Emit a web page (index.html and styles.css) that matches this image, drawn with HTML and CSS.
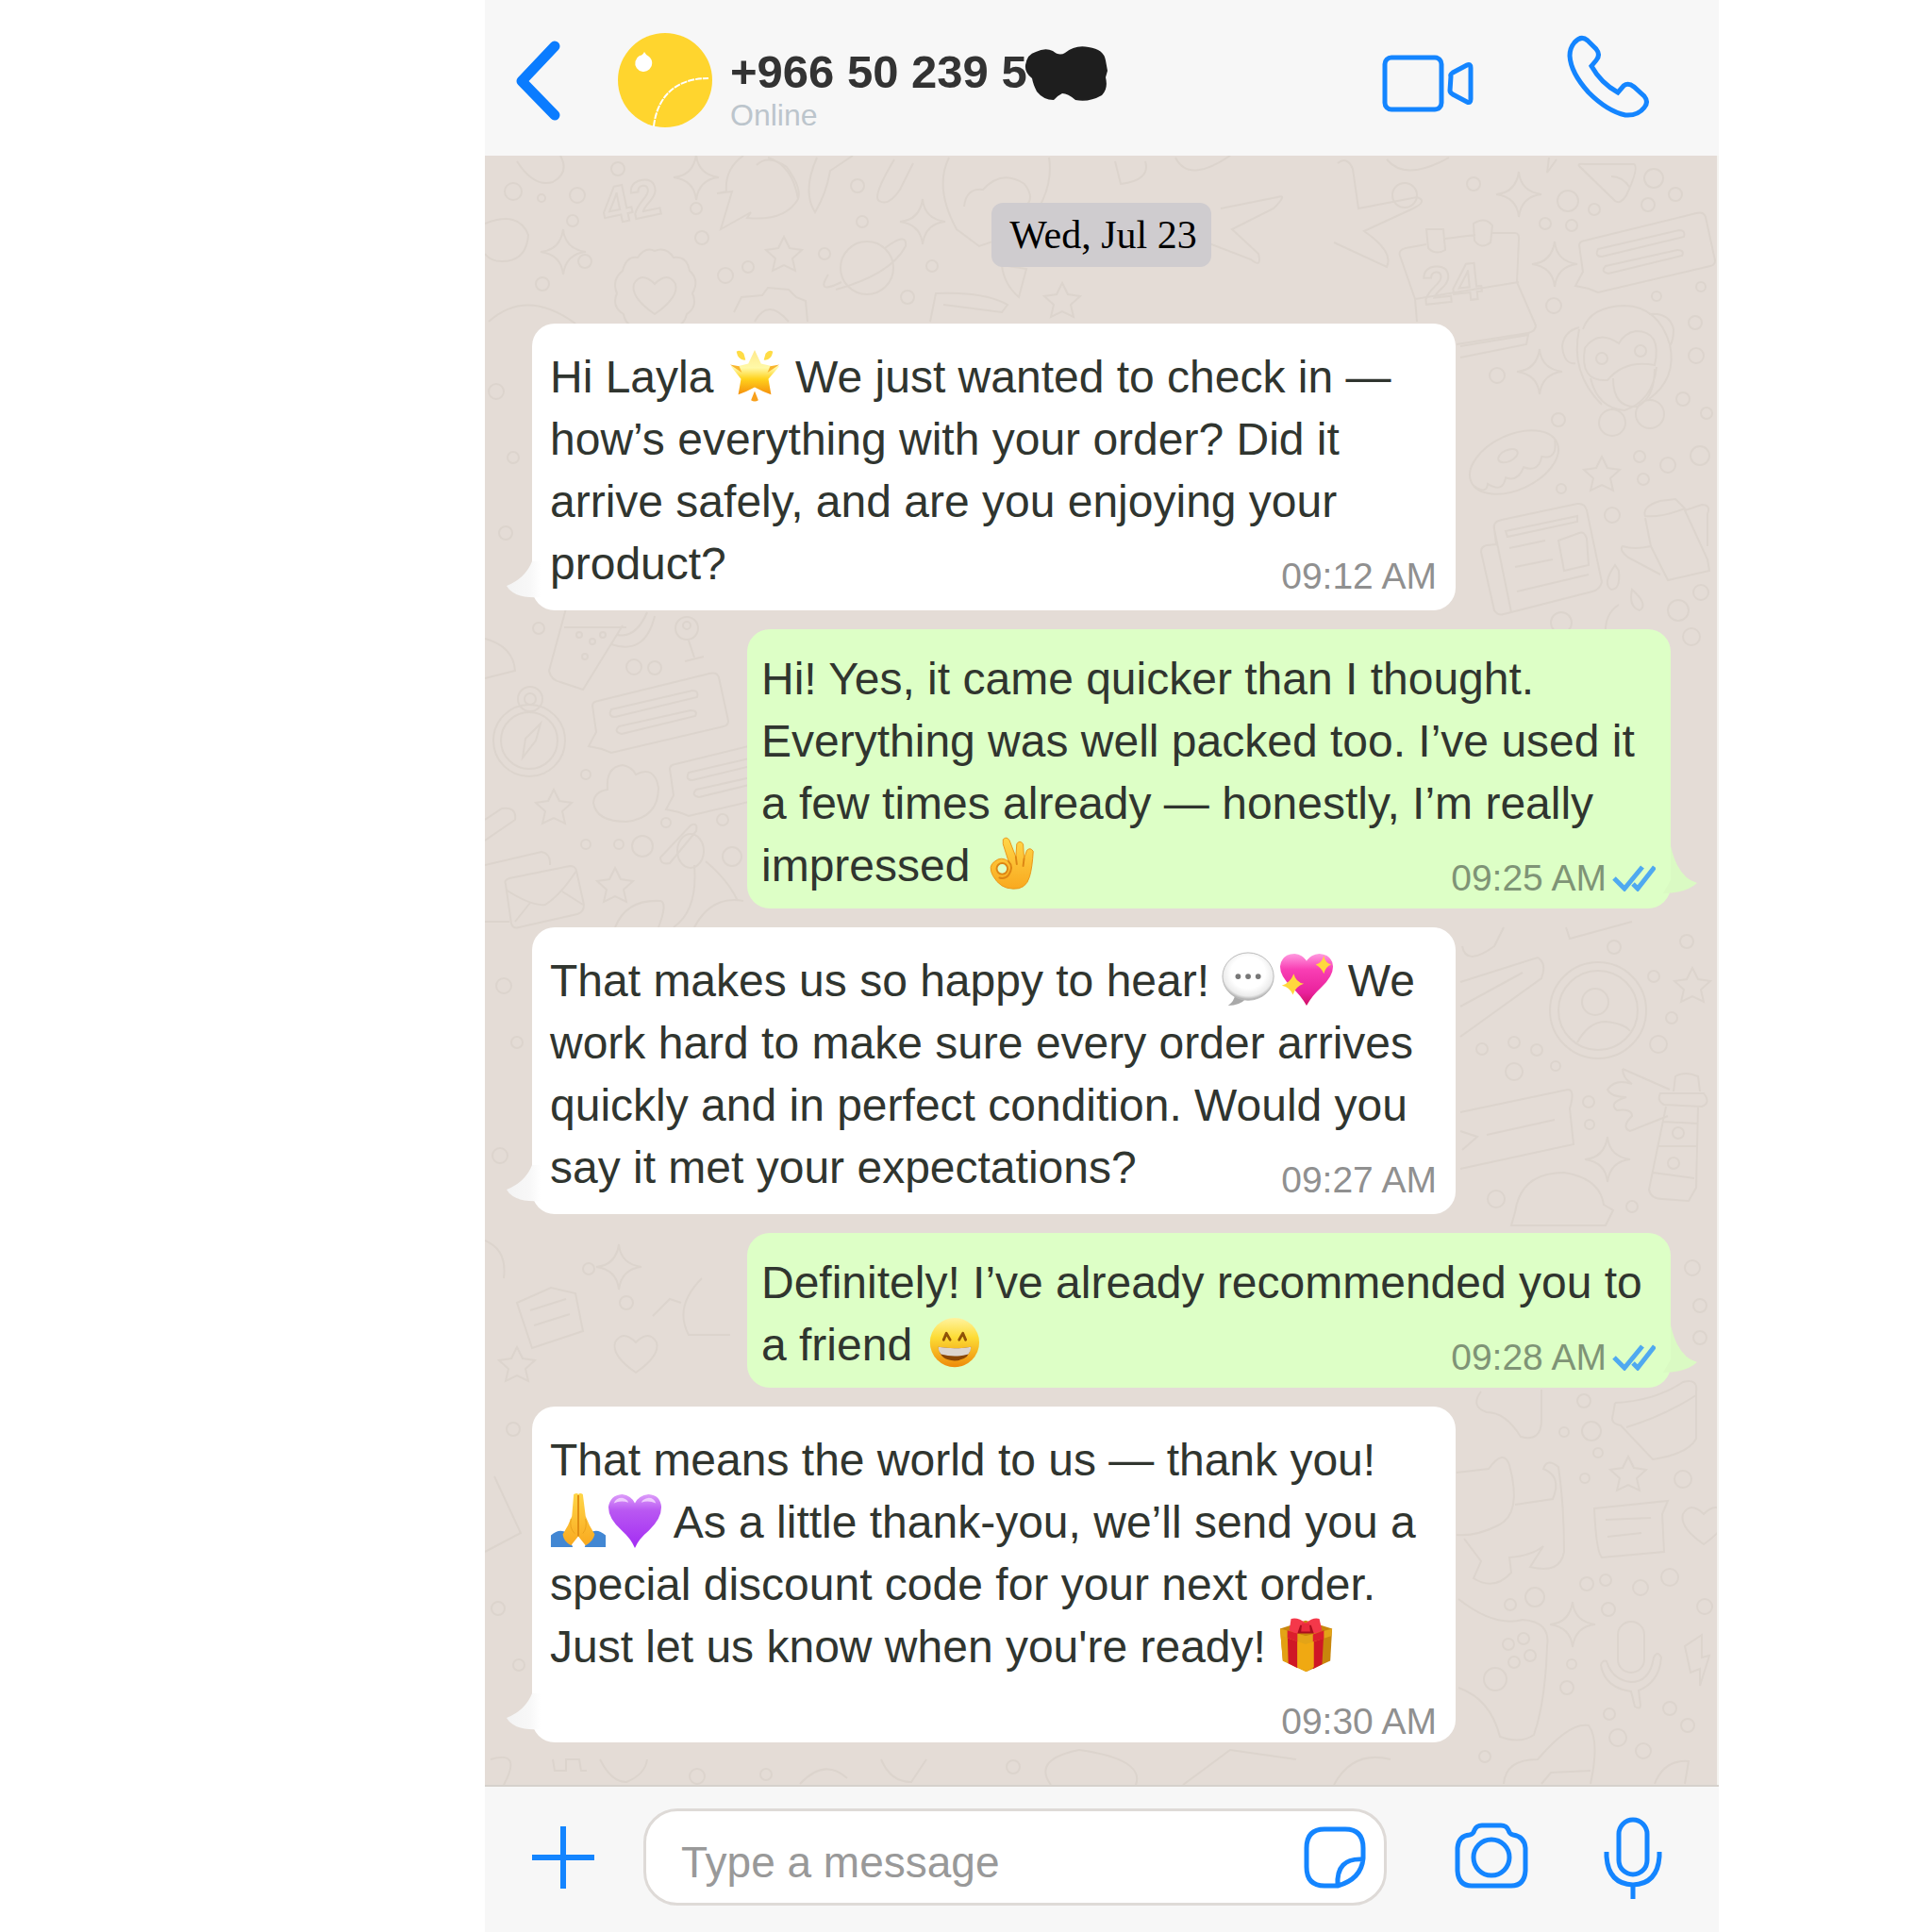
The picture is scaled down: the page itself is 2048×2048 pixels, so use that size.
FILE: index.html
```html
<!DOCTYPE html>
<html lang="en">
<head>
  <meta charset="UTF-8">
  <meta name="viewport" content="width=device-width, initial-scale=1.0">
  <title>Chat</title>
  <link rel="stylesheet" href="styles.css">
</head>
<body>
  <div class="phone">
    <header class="top-bar">
      <button class="icon-btn back" aria-label="Back">
        <svg width="50" height="100" viewBox="0 0 50 100"><path d="M43 14 L8 51 L43 87" stroke-width="11" stroke-linecap="round" stroke-linejoin="round"/></svg>
      </button>
      <svg class="avatar" width="100" height="100" viewBox="0 0 100 100" role="img" aria-label="Profile picture">
        <circle cx="50" cy="50" r="50" fill="#ffd52e"/>
        <path d="M28 20 Q30 24 33 25 A9 9 0 1 1 23 24 Q26 24 28 20 Z" fill="#fff"/>
        <path d="M38 99 C41 72 57 48 96 48" fill="none" stroke="#fff" stroke-width="2" stroke-dasharray="7 1"/>
      </svg>
      <div class="contact">
        <h1>+966 50 239 5
          <svg class="scribble" width="88" height="58" viewBox="0 0 88 58" aria-hidden="true"><path d="M1 20 Q3 8 12 6 Q22 1 30 5 Q37 11 43 7 Q54 -2 68 1 Q84 3 86 15 L88 26 L86 33 Q89 45 82 52 Q68 60 54 57 Q46 50 40 50 Q34 53 31 57 Q20 57 13 48 Q9 40 8 34 Q0 28 1 20 Z" fill="#1e1e1e"/></svg>
        </h1>
        <p>Online</p>
      </div>
      <button class="icon-btn video" aria-label="Video call">
        <svg width="100" height="100" viewBox="0 0 100 100"><rect x="4" y="26" width="60" height="55" rx="7"/><path d="M74 46 Q73 44 76 42 L91 34 Q95 32 95 37 V70 Q95 75 91 73 L76 65 Q73 63 73 61 Z"/></svg>
      </button>
      <button class="icon-btn call" aria-label="Call">
        <svg width="90" height="100" viewBox="0 0 90 100"><path d="M9 10 Q16 2 23 8 L32 17 Q37 23 32 29 L27 35 Q37 53 55 63 L61 56 Q66 52 72 57 L83 67 Q88 73 83 79 Q76 88 63 87 Q44 83 24 63 Q5 42 4 24 Q4 16 9 10 Z"/></svg>
      </button>
    </header>

    <main class="chat">
      <!-- wallpaper doodles -->
      <svg class="wallpaper" viewBox="0 0 1306 1727" preserveAspectRatio="xMinYMin slice" aria-hidden="true">
        <defs>
          <path id="spark" d="M0 -24 Q2 -3 24 0 Q3 2 0 24 Q-2 3 -24 0 Q-3 -2 0 -24 Z"/>
          <path id="star" d="M0 -19 L6 -7 L19 -5 L9 4 L12 17 L0 11 L-12 17 L-9 4 L-19 -5 L-6 -7 Z"/>
          <path id="heart" d="M0 22 Q-26 4 -22 -10 Q-14 -24 0 -10 Q14 -24 22 -10 Q26 4 0 22 Z"/>
          <g id="note">
            <path d="M4 34 Q4 30 10 29 L128 0 Q136 -2 138 4 L148 50 Q148 55 143 56 L24 84 L14 80 L0 77 L8 62 Z"/>
            <path d="M24 38 L110 18 Q117 18 115 25 L28 46 Q20 46 24 38 Z M32 56 L108 39 Q116 39 113 45 L35 64 Q26 62 32 56 Z"/>
          </g>
          <g id="cookie">
            <path d="M0 -45 Q12 -50 20 -38 Q34 -40 37 -24 Q48 -14 40 0 Q46 14 34 22 Q30 38 14 36 Q0 46 -12 36 Q-30 38 -33 22 Q-46 14 -40 0 Q-46 -14 -34 -24 Q-30 -40 -18 -38 Q-10 -50 0 -45 Z"/>
            <use href="#heart"/>
          </g>
          <g id="mic">
            <rect x="-14" y="-28" width="28" height="54" rx="14"/>
            <path d="M-26 14 Q-30 12 -32 18 Q-28 42 0 46 L4 62 Q10 66 10 60 L8 45 Q30 36 32 10 Q28 2 24 10 Q20 36 0 36 Q-20 34 -26 14 Z"/>
          </g>
        </defs>
        <!-- top -->
        <use href="#spark" x="1096" y="41"/><use href="#spark" x="1134" y="115"/><use href="#spark" x="1118" y="229"/>
        <use href="#spark" x="224" y="23"/><use href="#spark" x="464" y="70"/><use href="#spark" x="83" y="102"/>
        <use href="#star" x="317" y="105"/><use href="#star" x="612" y="154"/><use href="#star" x="1184" y="338"/>
        <use href="#cookie" x="180" y="146"/>
        <path d="M34 6 Q52 34 72 28 Q90 18 80 0 M0 72 Q36 58 46 84 Q44 112 18 112 Q6 112 0 104 M4 176 Q44 140 96 178"/>
        <text x="128" y="74" transform="rotate(-12 128 74)">42</text>
        <path d="M274 0 Q254 14 256 38 L246 40 L262 38 L250 78 L282 60 L278 66 Q318 70 332 46 Q326 10 300 2 M288 10 Q300 -2 320 12 Q336 34 332 46 M352 2 Q336 38 350 60 Q362 40 366 16 L390 0"/>
        <path d="M434 4 Q410 44 418 48 Q428 54 440 36 L454 8 M492 2 Q476 34 500 78 L524 96 L570 80 Q604 40 598 2 M508 54 Q510 34 528 36 Q548 14 572 30 Q584 46 572 54"/>
        <circle cx="405" cy="119" r="28"/><path d="M378 134 Q350 148 364 126 M424 98 Q448 80 446 96 Q430 126 372 142"/>
        <path d="M264 166 L272 150 L294 148 L300 140 L322 142 L330 150 L340 154 L342 176 M286 176 Q300 150 322 176 M472 176 L478 146 Q530 144 554 158 L548 166 L486 158 M548 116 L574 120 L566 150 Q550 136 548 116 Z"/>
        <path d="M668 6 L674 30 Q706 26 700 6 M732 2 Q746 30 790 0 M780 56 L840 44 Q852 40 836 56 L792 78 L820 104 Q824 120 812 110 L760 90 L720 108"/>
        <circle cx="975" cy="42" r="13"/><path d="M904 8 Q914 0 920 14 L926 56 L988 44 Q1000 48 984 56 L932 80 Q964 102 956 118 L900 92"/>
        <path d="M956 4 Q976 28 1022 2 M1128 2 L1126 18 L1136 4"/>
        <path d="M970 106 Q968 100 976 98 L998 94 M1018 88 L1050 84 M1068 82 H1092 Q1097 82 1096 90 L1094 134 L1114 180 Q1114 186 1106 188 L1030 200 M970 106 L986 152 L988 176 M986 152 L1096 134 M998 78 H1016 L1018 100 Q1008 106 1000 98 Z M1048 72 Q1060 64 1068 74 L1066 92 Q1056 100 1049 90 Z M1034 202 L1106 190 L1104 200 L1034 214"/>
        <text x="996" y="158" transform="rotate(-6 996 158)">24</text>
        <path d="M1160 11 Q1158 8 1166 9 H1218 Q1224 12 1210 42 Q1204 52 1198 48 Z M1194 22 Q1206 22 1214 34"/>
        <use href="#note" x="1156" y="61"/>
        <!-- monkey -->
        <path d="M1164 184 Q1172 160 1208 159 Q1244 160 1256 200 Q1264 236 1234 258 M1160 182 Q1144 186 1142 202 Q1144 222 1156 220 M1234 168 Q1256 166 1260 184 Q1260 196 1256 202 M1160 184 Q1150 230 1184 264"/>
        <path d="M1202 199 Q1180 184 1166 204 Q1160 240 1190 238 Q1208 216 1240 222 Q1248 186 1220 186 Q1208 188 1202 199 Z M1172 236 Q1180 268 1208 270 Q1238 260 1242 224 M1196 236 Q1196 268 1222 266 Q1240 256 1240 226"/>
        <circle cx="1184" cy="215" r="6"/><circle cx="1225" cy="207" r="6"/><circle cx="1195" cy="283" r="14"/><circle cx="1235" cy="274" r="15"/>
        <!-- donut -->
        <g transform="rotate(-25 1091 325)"><ellipse cx="1091" cy="325" rx="50" ry="29"/><ellipse cx="1088" cy="316" rx="11" ry="6"/><path d="M1042 330 Q1050 344 1056 334 Q1066 350 1076 336 Q1086 346 1098 334 Q1110 346 1120 332 Q1134 342 1140 322"/></g>
        <!-- newspaper -->
        <path d="M1070 396 Q1068 388 1078 386 L1158 369 Q1166 368 1168 376 L1184 452 Q1182 460 1174 462 L1080 486 Q1074 488 1070 482 L1056 420 Q1056 414 1062 413 L1072 412 Z M1070 396 L1088 484 M1082 398 L1158 382 L1158 388 L1084 404 Z M1086 416 L1124 408 M1092 436 L1132 428 M1138 408 L1160 400 Q1166 398 1168 406 L1170 434 L1144 440 Z M1094 462 L1170 444"/>
        <!-- kettle -->
        <path d="M1230 382 Q1226 372 1246 366 L1262 364 L1272 374 Q1246 384 1230 382 Z M1230 384 L1236 414 Q1218 418 1206 414 Q1202 418 1212 426 L1246 444 M1236 414 L1254 450 L1298 440 L1296 428 L1272 376 L1290 370 Q1300 370 1296 380 L1296 414"/>
        <path d="M1198 434 Q1184 454 1194 460 Q1204 460 1202 440 Z M1216 460 Q1212 478 1224 482 Q1234 476 1216 460 Z M1202 476 Q1186 486 1188 510"/>
        <!-- left -->
        <path d="M0 512 Q30 520 32 546 L0 554 M86 480 L68 546 Q70 556 80 558 L104 566 L146 498 M84 500 H150"/>
        <circle cx="100" cy="508" r="3"/><circle cx="114" cy="515" r="3"/><circle cx="125" cy="508" r="3"/><circle cx="106" cy="531" r="3"/>
        <path d="M134 518 Q170 530 180 488 M140 508 Q160 512 172 484"/>
        <circle cx="214" cy="501" r="12"/><circle cx="214" cy="498" r="4"/><path d="M216 514 L222 532 M212 536 L232 531"/>
        <circle cx="47" cy="620" r="38"/><circle cx="47" cy="620" r="30"/><circle cx="48" cy="576" r="13"/><circle cx="48" cy="576" r="6"/><path d="M59 602 L54 620 L40 638 L43 618 Z"/>
        <use href="#note" x="110" y="549"/><use href="#note" x="192" y="616"/>
        <path d="M130 672 Q128 648 146 646 Q156 648 160 656 Q180 646 184 670 Q184 702 150 706 Q118 706 115 686 Q116 674 130 672 Z"/>
        <use href="#star" x="73" y="691"/><use href="#star" x="138" y="774"/>
        <path d="M0 704 L18 692 Q34 690 32 704 L0 726 M0 752 L60 738 Q70 740 69 752 M22 772 Q20 768 26 766 L90 753 Q96 753 97 758 L105 794 Q105 802 98 804 L36 818 Q30 820 28 814 Z M22 778 Q50 796 64 794 Q80 784 97 758 M32 812 L48 792 M104 794 L82 780 M0 812 H26"/>
        <path d="M186 744 L218 710 Q226 706 224 716 L196 750 Q186 752 186 744 Z M138 818 Q150 788 186 790 Q194 792 184 818 M222 752 Q226 800 200 818 M234 748 Q258 768 268 790 M222 818 Q240 784 274 790"/><ellipse cx="218" cy="737" rx="14" ry="18"/>
        <!-- right middle -->
        <path d="M1034 876 L1116 850 Q1126 856 1120 872 L1034 934 M1034 902 L1100 866"/>
        <circle cx="1180" cy="906" r="51"/><circle cx="1180" cy="906" r="42"/><circle cx="1177" cy="897" r="14"/><path d="M1158 940 Q1170 918 1188 918 Q1208 920 1214 928"/>
        <use href="#star" x="1280" y="880"/>
        <path d="M1206 968 L1256 990 M1206 968 Q1206 978 1216 984 Q1198 978 1190 990 Q1194 998 1210 998 Q1190 1004 1200 1012 Q1216 1010 1216 1018 Q1204 1030 1214 1034 L1254 1018"/>
        <path d="M1260 992 L1262 976 Q1272 970 1286 976 L1288 992 M1246 994 H1292 Q1300 1004 1290 1008 L1250 1006 Q1242 1002 1246 994 Z M1252 1008 L1234 1096 Q1236 1106 1248 1106 L1276 1108 L1284 1094 L1286 1008 M1248 1024 L1286 1026 M1244 1050 H1284 M1238 1078 L1282 1084"/>
        <circle cx="1265" cy="1036" r="6"/><circle cx="1260" cy="1068" r="6"/>
        <path d="M1034 1014 L1148 990 Q1156 990 1150 1010 L1154 1048 L1034 1074 M1062 1038 L1134 1022 M1034 1034 L1052 1040 L1036 1054"/>
        <use href="#spark" x="1190" y="1064"/>
        <path d="M1092 1120 Q1098 1078 1144 1078 Q1182 1084 1186 1112 L1196 1118 L1188 1134 L1088 1134 Z"/>
        <path d="M1036 838 Q1040 860 1070 838 L1080 818 M1146 818 L1150 830 L1216 812"/>
        <!-- right lower -->
        <path d="M1056 1310 Q1044 1326 1062 1332 Q1082 1332 1098 1358 Q1120 1364 1120 1340 V1308 M1198 1322 L1196 1334 Q1192 1344 1204 1346 L1238 1382 Q1276 1376 1284 1360 L1284 1310 Q1286 1296 1270 1300 Q1240 1320 1198 1322 M1210 1348 Q1250 1336 1284 1314"/>
        <path d="M1030 1396 L1064 1392 Q1080 1370 1086 1388 Q1100 1440 1074 1452 Q1050 1464 1030 1462 M1092 1430 L1132 1424 Q1142 1400 1122 1392 Q1126 1380 1138 1390 Q1144 1430 1144 1480 Q1140 1504 1108 1496 L1122 1474 Q1110 1484 1086 1486 L1088 1502 Q1070 1522 1048 1508 L1056 1490 L1038 1466"/>
        <use href="#star" x="1212" y="1398"/><use href="#heart" x="1292" y="1450"/>
        <path d="M1176 1434 L1254 1426 L1248 1440 L1250 1480 L1184 1486 Q1178 1480 1176 1434 Z M1188 1446 L1236 1444 M1190 1464 L1226 1460"/>
        <path d="M1032 1530 Q1070 1560 1100 1552 Q1130 1554 1126 1580 Q1124 1640 1112 1674 Q1098 1684 1076 1676 Q1066 1636 1032 1624"/>
        <circle cx="1071" cy="1615" r="12"/><circle cx="1085" cy="1578" r="6"/><circle cx="1101" cy="1572" r="6"/><circle cx="1091" cy="1597" r="6"/><circle cx="1108" cy="1590" r="6"/>
        <use href="#spark" x="1153" y="1557"/><use href="#mic" x="1215" y="1582"/>
        <path d="M1290 1568 L1272 1580 L1278 1608 L1288 1604 L1288 1622 L1298 1590 L1290 1592 Z M1080 1726 Q1082 1700 1116 1700 Q1150 1660 1170 1664 Q1182 1680 1172 1726 M1120 1726 L1130 1714 L1172 1712 M1240 1726 Q1250 1700 1276 1702 L1272 1726"/>
        <!-- left lower -->
        <path d="M34 1216 L70 1200 L96 1206 L104 1246 L50 1264 Z M48 1224 L86 1212 M52 1240 L90 1228 M178 1230 L196 1212 L208 1216 M0 1150 Q24 1160 20 1190 M10 1400 L38 1460 L0 1480 M230 1190 Q200 1220 216 1250 L260 1250"/>
        <use href="#star" x="34" y="1282"/><use href="#spark" x="142" y="1178"/><use href="#heart" x="160" y="1268"/>
        <path d="M6 1700 Q40 1690 20 1727 M72 1700 L74 1712 H86 V1700 H100 L102 1712 H108 M122 1700 Q134 1724 150 1724 Q170 1716 172 1700 M334 1726 Q360 1698 384 1720 M420 1700 Q430 1724 452 1724 L468 1700 M600 1727 Q580 1700 630 1690 Q700 1700 690 1727 M740 1727 L790 1690 L860 1700 M900 1727 Q920 1690 960 1700"/>
        <g>
          <circle cx="30" cy="38" r="9"/><circle cx="60" cy="45" r="4"/><circle cx="98" cy="42" r="8"/><circle cx="141" cy="14" r="7"/><circle cx="93" cy="69" r="6"/><circle cx="224" cy="56" r="6"/><circle cx="230" cy="87" r="7"/><circle cx="106" cy="112" r="7"/><circle cx="61" cy="136" r="7"/><circle cx="255" cy="127" r="8"/><circle cx="279" cy="118" r="6"/><circle cx="395" cy="32" r="7"/><circle cx="400" cy="70" r="6"/><circle cx="360" cy="104" r="6"/><circle cx="474" cy="117" r="6"/><circle cx="448" cy="150" r="7"/>
          <circle cx="1048" cy="30" r="7"/><circle cx="1148" cy="48" r="11"/><circle cx="1239" cy="24" r="10"/><circle cx="1262" cy="41" r="7"/><circle cx="1233" cy="52" r="7"/><circle cx="1176" cy="57" r="6"/><circle cx="1124" cy="72" r="6"/><circle cx="1152" cy="74" r="6"/><circle cx="1133" cy="159" r="8"/><circle cx="1289" cy="139" r="5"/><circle cx="1242" cy="149" r="5"/><circle cx="1283" cy="177" r="7"/><circle cx="1284" cy="212" r="8"/><circle cx="1073" cy="233" r="8"/><circle cx="1270" cy="258" r="7"/><circle cx="1138" cy="280" r="7"/><circle cx="1295" cy="273" r="6"/><circle cx="1224" cy="319" r="6"/><circle cx="1254" cy="328" r="8"/><circle cx="1288" cy="318" r="10"/><circle cx="1228" cy="343" r="6"/><circle cx="1141" cy="353" r="5"/><circle cx="1195" cy="381" r="8"/><circle cx="1289" cy="463" r="8"/><circle cx="1265" cy="482" r="11"/><circle cx="1279" cy="510" r="9"/><circle cx="1141" cy="495" r="11"/>
          <circle cx="57" cy="501" r="6"/><circle cx="158" cy="542" r="8"/><circle cx="180" cy="543" r="7"/><circle cx="107" cy="656" r="5"/><circle cx="107" cy="730" r="5"/><circle cx="142" cy="730" r="5"/><circle cx="167" cy="732" r="11"/><circle cx="192" cy="707" r="5"/><circle cx="252" cy="704" r="6"/><circle cx="262" cy="743" r="10"/>
          <circle cx="1274" cy="833" r="7"/><circle cx="1197" cy="839" r="7"/><circle cx="1239" cy="870" r="6"/><circle cx="1258" cy="914" r="6"/><circle cx="1244" cy="942" r="9"/><circle cx="1057" cy="947" r="6"/><circle cx="1091" cy="940" r="6"/><circle cx="1115" cy="948" r="6"/><circle cx="1091" cy="971" r="9"/><circle cx="1135" cy="965" r="5"/><circle cx="1170" cy="1003" r="6"/><circle cx="1171" cy="1027" r="5"/><circle cx="1072" cy="1106" r="9"/><circle cx="1216" cy="1114" r="6"/>
          <circle cx="1280" cy="1179" r="8"/><circle cx="1288" cy="1219" r="7"/><circle cx="1288" cy="1253" r="7"/><circle cx="1165" cy="1320" r="7"/><circle cx="1173" cy="1352" r="10"/><circle cx="1144" cy="1353" r="5"/><circle cx="1180" cy="1375" r="5"/><circle cx="1166" cy="1402" r="5"/><circle cx="1270" cy="1403" r="9"/><circle cx="1168" cy="1514" r="7"/><circle cx="1188" cy="1510" r="6"/><circle cx="1225" cy="1518" r="8"/><circle cx="1256" cy="1507" r="9"/><circle cx="1113" cy="1528" r="10"/><circle cx="1087" cy="1536" r="6"/><circle cx="1191" cy="1541" r="7"/><circle cx="1293" cy="1538" r="8"/><circle cx="1147" cy="1624" r="7"/><circle cx="1152" cy="1599" r="5"/><circle cx="1256" cy="1646" r="7"/><circle cx="1192" cy="1652" r="6"/><circle cx="1201" cy="1677" r="9"/><circle cx="1228" cy="1691" r="8"/><circle cx="1275" cy="1664" r="7"/><circle cx="1060" cy="1697" r="6"/>
          <circle cx="12" cy="250" r="8"/><circle cx="30" cy="320" r="6"/><circle cx="22" cy="400" r="7"/><circle cx="20" cy="880" r="8"/><circle cx="34" cy="940" r="6"/><circle cx="16" cy="1060" r="8"/><circle cx="110" cy="1180" r="6"/><circle cx="150" cy="1216" r="7"/><circle cx="30" cy="1350" r="7"/><circle cx="14" cy="1540" r="7"/><circle cx="36" cy="1600" r="6"/><circle cx="225" cy="1718" r="8"/><circle cx="298" cy="1716" r="6"/><circle cx="560" cy="1708" r="7"/>
        </g>
      </svg>

      <p class="date">Wed, Jul 23</p>

      <article class="bubble incoming">
        <p class="text">Hi Layla
          <svg class="emoji" viewBox="0 0 62 60" role="img" aria-label="glowing star">
            <defs><linearGradient id="gold" x1="0" y1="0" x2="0" y2="1"><stop offset="0" stop-color="#ffe98a"/><stop offset=".4" stop-color="#fff9a8"/><stop offset=".65" stop-color="#ffd21c"/><stop offset="1" stop-color="#f58f0c"/></linearGradient></defs>
            <path d="M31 2 L38 17 Q48 20 58 20 L46 34 L49 51 Q40 48 31 43 Q22 48 13 51 L16 34 L5 20 Q15 20 24 17 Z" fill="url(#gold)"/>
            <path d="M11 4 Q15 1 19 6 L21 13 Q13 14 11 4 Z M51 4 Q47 1 43 6 L41 13 Q49 14 51 4 Z" fill="#ffdc45"/>
            <path d="M31 47 L35 57 Q31 60 27 57 Z" fill="#f8a01c"/><path d="M4 18 L14 20 L17 27 Z M58 18 L48 20 L45 27 Z" fill="#f9b42c"/>
          </svg>
          We just wanted to check in — how’s everything with your order? Did it arrive safely, and are you enjoying your product?</p>
        <p class="meta"><time>09:12 AM</time></p>
        <svg class="tail" width="36" height="40" viewBox="0 0 36 40" aria-hidden="true">
          <defs><linearGradient id="fold"><stop offset="0" stop-color="#f3f3f3"/><stop offset=".7" stop-color="#f8f8f8"/><stop offset="1" stop-color="#fff"/></linearGradient></defs>
          <path d="M27 0 Q20 18 0 26 Q8 40 36 38 V0 Z" fill="url(#fold)"/>
        </svg>
      </article>

      <article class="bubble outgoing">
        <p class="text">Hi! Yes, it came quicker than I thought. Everything was well packed too. I’ve used it a few times already — honestly, I’m really impressed
          <svg class="emoji" viewBox="0 0 62 60" role="img" aria-label="OK hand">
            <defs><linearGradient id="skin" x1="0" y1="0" x2="0" y2="1"><stop offset="0" stop-color="#ffd648"/><stop offset="1" stop-color="#f9a91f"/></linearGradient></defs>
            <path d="M22 3 Q26 -1 29 4 L36 22 L37 8 Q40 3 44 8 L45 24 L48 15 Q52 11 55 16 Q54 34 51 44 Q47 58 33 57 Q19 57 11 43 Q5 32 13 27 Q20 21 28 27 L22 8 Z" fill="url(#skin)" stroke="#e99418" stroke-width="1"/>
            <ellipse cx="21" cy="35" rx="6" ry="6" fill="#ddffc6" stroke="#dd8614" stroke-width="2"/>
            <path d="M28 27 Q34 33 28 42 Q24 47 18 45 M36 22 L37 30 M45 24 L44 32" fill="none" stroke="#dd8614" stroke-width="2" stroke-linecap="round"/>
          </svg></p>
        <p class="meta"><time>09:25 AM</time>
          <svg class="ticks" width="46" height="28" viewBox="0 0 46 28" role="img" aria-label="Read"><path d="M2 14 L13 25 L32 2 M22 20 L27 25 L45 2"/></svg></p>
        <svg class="tail" width="36" height="50" viewBox="0 0 36 50" aria-hidden="true"><path d="M8 0 Q16 34 36 39 Q24 50 0 50 L8 36 Z" fill="#dafac3"/></svg>
      </article>

      <article class="bubble incoming">
        <p class="text">That makes us so happy to hear!
          <span class="pair"><svg class="emoji" viewBox="0 0 62 60" role="img" aria-label="speech balloon">
            <defs><radialGradient id="balloon" cx=".5" cy=".42" r=".56"><stop offset=".6" stop-color="#fff"/><stop offset=".88" stop-color="#ececec"/><stop offset="1" stop-color="#b4b4b4"/></radialGradient></defs>
            <path d="M15 46 Q14 54 7 59 Q20 59 27 51 Z" fill="#a9a9a9"/>
            <ellipse cx="29" cy="27" rx="28" ry="26" fill="url(#balloon)" stroke="#b9b9b9" stroke-width="1"/>
            <circle cx="18" cy="27" r="3" fill="#777"/><circle cx="29" cy="27" r="3" fill="#777"/><circle cx="40" cy="27" r="3" fill="#777"/>
          </svg><svg class="emoji" viewBox="0 0 62 60" role="img" aria-label="sparkling heart">
            <defs><linearGradient id="pink" x1="0" y1="0" x2="0" y2="1"><stop offset="0" stop-color="#ff9be0"/><stop offset=".3" stop-color="#f93fb4"/><stop offset=".75" stop-color="#e9219c"/><stop offset="1" stop-color="#cf0f63"/></linearGradient></defs>
            <path d="M31 59 Q25 48 15 39 Q2 27 2 16 Q4 2 18 2 Q27 3 31 10 Q35 3 45 2 Q59 3 60 16 Q60 27 47 39 Q37 48 31 59 Z" fill="url(#pink)"/>
            <path d="M17 24 Q19 33 28 35 Q19 38 16 47 Q13 39 4 37 Q13 34 17 24 Z M50 4 Q51 12 58 14 Q52 16 50 24 Q47 17 41 14 Q48 12 50 4 Z" fill="#ffd83d"/>
          </svg></span>
          We work hard to make sure every order arrives quickly and in perfect condition. Would you say it met your expectations?</p>
        <p class="meta"><time>09:27 AM</time></p>
        <svg class="tail" width="36" height="40" viewBox="0 0 36 40" aria-hidden="true"><path d="M27 0 Q20 18 0 26 Q8 40 36 38 V0 Z" fill="url(#fold)"/></svg>
      </article>

      <article class="bubble outgoing">
        <p class="text">Definitely! I’ve already recommended you to a&nbsp;friend
          <svg class="emoji" viewBox="0 0 62 60" role="img" aria-label="smiling face">
            <defs><linearGradient id="face" x1="0" y1="0" x2="0" y2="1"><stop offset="0" stop-color="#fff3a0"/><stop offset=".4" stop-color="#fddc35"/><stop offset="1" stop-color="#ee8a0a"/></linearGradient></defs>
            <circle cx="33" cy="29" r="27" fill="url(#face)"/>
            <path d="M21 26 L24 19 L28 26 M38 26 L42 19 L45 26" fill="none" stroke="#8f5208" stroke-width="3" stroke-linejoin="round" stroke-linecap="round"/>
            <path d="M15 34 Q33 37 51 34 Q49 49 33 49 Q17 49 15 34 Z" fill="#8a4606"/>
            <path d="M15 34 Q33 37 51 34 Q51 38 48 42 Q33 46 18 42 Q15 38 15 34 Z" fill="#ddd5cf"/>
          </svg></p>
        <p class="meta"><time>09:28 AM</time>
          <svg class="ticks" width="46" height="28" viewBox="0 0 46 28" role="img" aria-label="Read"><path d="M2 14 L13 25 L32 2 M22 20 L27 25 L45 2"/></svg></p>
        <svg class="tail" width="36" height="50" viewBox="0 0 36 50" aria-hidden="true"><path d="M8 0 Q16 34 36 39 Q24 50 0 50 L8 36 Z" fill="#dafac3"/></svg>
      </article>

      <article class="bubble incoming long">
        <p class="text">That means the world to us — thank you!
          <span class="pair"><svg class="emoji" viewBox="0 0 62 60" role="img" aria-label="folded hands">
            <path d="M1 46 Q10 38 18 43 L25 59 H1 Z M61 46 Q52 38 44 43 L38 59 H61 Z" fill="#4287d3"/>
            <path d="M26 1 Q30 -1 31 1 Q33 -1 36 1 L39 25 Q43 36 49 45 Q47 53 39 57 L31 47 L23 57 Q15 53 14 45 Q20 36 24 25 Z" fill="url(#skin)"/>
            <path d="M31 2 V47" stroke="#e08c12" stroke-width="2"/><path d="M23 28 Q21 38 27 44 M39 28 Q41 38 36 44" fill="none" stroke="#e9a01c" stroke-width="1"/>
          </svg><svg class="emoji" viewBox="0 0 62 60" role="img" aria-label="purple heart">
            <defs><linearGradient id="violet" x1="0" y1="0" x2="0" y2="1"><stop offset="0" stop-color="#dd9dfa"/><stop offset=".3" stop-color="#b958f2"/><stop offset="1" stop-color="#a32bf3"/></linearGradient></defs>
            <path d="M31 60 Q27 50 17 41 Q2 28 2 15 Q4 2 17 1 Q27 2 31 11 Q35 2 46 1 Q59 2 60 15 Q60 28 46 41 Q35 50 31 60 Z" fill="url(#violet)"/>
            <path d="M8 11 Q10 5 17 5 Q22 6 24 10 Q15 7 8 11 Z M38 10 Q40 6 46 5 Q52 5 54 11 Q46 7 38 10 Z" fill="#efcdfd"/>
          </svg></span>
          As a little thank-you, we’ll send you a special discount code for your next order. Just let us know when you're ready!
          <svg class="emoji" viewBox="0 0 62 60" role="img" aria-label="gift">
            <path d="M2 12 L30 3 L59 12 L57 47 L31 59 L5 47 Z" fill="#c8860c"/>
            <path d="M2 12 L30 20 V59 L5 47 Z" fill="#e2a013"/><path d="M10 14 L21 17 V55 L11 50 Z M38 18 L50 14 L48 51 L38 56 Z" fill="#cf1726"/>
            <path d="M21 20 H39 V54 L31 59 L21 54 Z" fill="#f0a912"/><path d="M2 12 L30 20 L59 12 L58 20 L30 29 L4 20 Z" fill="#e3a417"/>
            <path d="M10 14 L21 17 V26 L10 22 Z M38 18 L50 14 V23 L38 26 Z" fill="#dc1e2d"/>
            <path d="M14 1 Q22 -1 30 6 Q38 -1 45 1 L48 14 Q39 19 30 15 Q21 19 12 14 Z" fill="#f4384a"/><path d="M24 8 H36 L39 17 H21 Z" fill="#a90d1d"/><path d="M26 6 H34 L35 15 H25 Z" fill="#ea2b3d"/>
          </svg></p>
        <p class="meta"><time>09:30 AM</time></p>
        <svg class="tail" width="36" height="40" viewBox="0 0 36 40" aria-hidden="true"><path d="M27 0 Q20 18 0 26 Q8 40 36 38 V0 Z" fill="url(#fold)"/></svg>
      </article>
    </main>

    <footer class="composer">
      <button class="icon-btn" aria-label="Attach">
        <svg width="68" height="68" viewBox="0 0 68 68"><path d="M34 1 V67 M1 34 H67" stroke-width="6"/></svg>
      </button>
      <div class="field">
        <input type="text" aria-label="Message" placeholder="Type a message">
        <button class="icon-btn" aria-label="Stickers">
          <svg width="66" height="66" viewBox="0 0 66 66"><path d="M22 3 H44 Q63 3 63 23 V34 Q61 56 36 63 H22 Q3 63 3 43 V23 Q3 3 22 3 Z M63 35 Q34 33 36 63"/></svg>
        </button>
      </div>
      <button class="icon-btn camera" aria-label="Camera">
        <svg width="78" height="74" viewBox="0 0 78 74"><path d="M3 27 Q4 14 16 13 Q20 12 21 8 Q23 3 29 3 H49 Q55 3 57 8 Q58 12 62 13 Q74 15 75 27 V51 Q74 67 60 67 H18 Q4 67 3 51 Z"/><circle cx="39" cy="37" r="19"/></svg>
      </button>
      <button class="icon-btn mic" aria-label="Voice message">
        <svg width="62" height="88" viewBox="0 0 62 88"><rect x="16" y="4" width="30" height="58" rx="15"/><path d="M3 38 V43 Q5 72 31 73 Q57 72 59 43 V38 M31 73 V88"/></svg>
      </button>
    </footer>
  </div>
</body>
</html>
```
FILE: styles.css
```css
*{
  box-sizing: border-box;
}
body{
  margin: 0;
  padding: 0 226px 0 514px;
  background: #fff;
  font-family: "Liberation Sans", Arial, sans-serif;
}
h1, p{
  margin: 0;
}
.phone{
  min-height: 100vh;
  display: flex;
  flex-direction: column;
  background: #f7f7f7;
}
.icon-btn{
  display: block;
  flex: none;
  padding: 0;
  border: 0;
  background: none;
  cursor: pointer;
}
.icon-btn svg{
  display: block;
  fill: none;
  stroke: #1485ff;
  stroke-width: 5;
}

/* header */
.top-bar{
  display: flex;
  align-items: flex-start;
  padding: 35px 72px 25px 31px;
}
.top-bar .back svg{
  stroke: #0a7cff;
}
.avatar{
  flex: none;
  margin-left: 60px;
}
.contact{
  flex: 1;
  padding: 13px 0 0 19px;
}
.contact h1{
  position: relative;
  width: max-content;
  font-size: 49px;
  line-height: 56px;
  color: #333;
}
.scribble{
  position: absolute;
  left: 312px;
  top: 1px;
}
.contact p{
  font-size: 32px;
  line-height: 36px;
  color: #bcc5cc;
}
.call{
  margin-left: 96px;
}

/* messages */
.chat{
  position: relative;
  flex: 1;
  display: flex;
  flex-direction: column;
  gap: 20px;
  padding: 50px 49px 45px 50px;
  background: #e4dcd6;
  border-right: 2px solid #f4f3ef;
}
.wallpaper{
  position: absolute;
  left: 0;
  top: 0;
  width: 100%;
  height: 100%;
  fill: none;
  stroke: #dcd4cd;
  stroke-width: 2;
}
.wallpaper text{
  font-size: 56px;
  font-weight: bold;
}
.date{
  position: relative;
  align-self: center;
  margin-bottom: 40px;
  padding: 0 15px 0 19px;
  border-radius: 12px;
  background: #cfcccf;
  font-family: "Liberation Serif", "Times New Roman", serif;
  font-size: 42px;
  line-height: 68px;
  color: #000;
}
.bubble{
  position: relative;
  display: grid;
  width: calc(100% - 228px);
  border-radius: 24px;
  color: #30352f;
}
.incoming{
  align-self: flex-start;
  padding: 24px 20px 16px 19px;
  background: #fff;
}
.outgoing{
  align-self: flex-end;
  padding: 20px 16px 12px 15px;
  background: #ddffc6;
}
.text, .meta{
  grid-area: 1 / 1;
}
.text{
  font-size: 48px;
  line-height: 66px;
}
.emoji{
  width: 60px;
  height: 60px;
  vertical-align: -12px;
}
.pair{
  white-space: nowrap;
}
.meta{
  display: flex;
  align-items: center;
  gap: 6px;
  justify-self: end;
  align-self: end;
  font-size: 39px;
  line-height: 40px;
  color: #909090;
}
.outgoing .meta{
  color: #7f9476;
}
.long{
  padding-bottom: 2px;
}
.long .meta{
  grid-area: 2 / 1;
  margin-top: 26px;
}
.ticks{
  fill: none;
  stroke: #4fa9f0;
  stroke-width: 5;
}
.tail{
  position: absolute;
}
.incoming .tail{
  left: -27px;
  bottom: 12px;
}
.outgoing .tail{
  right: -28px;
  bottom: 16px;
}

/* message box */
.composer{
  display: flex;
  align-items: center;
  padding: 23px 60px 29px 49px;
  border-top: 2px solid #d6d1cc;
}
.field{
  flex: 1;
  min-width: 0;
  display: flex;
  align-items: center;
  margin: 0 72px 0 51px;
  padding: 0 19px 0 37px;
  border: 3px solid #dedad7;
  border-radius: 36px;
  background: #fff;
}
.field input{
  flex: 1;
  min-width: 0;
  height: 97px;
  padding: 10px 0 0;
  border: 0;
  outline: 0;
  background: none;
  font: 46px "Liberation Sans", Arial, sans-serif;
  color: #30352f;
}
.field input::placeholder{
  color: #999;
  opacity: 1;
}
.mic{
  margin-left: 80px;
}
```
